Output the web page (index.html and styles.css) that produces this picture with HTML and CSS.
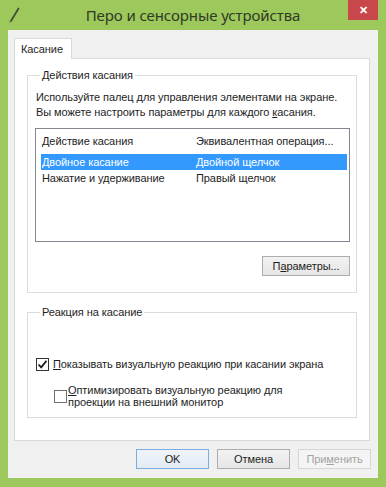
FILE: index.html
```html
<!DOCTYPE html>
<html lang="ru">
<head>
<meta charset="utf-8">
<title>Перо и сенсорные устройства</title>
<link rel="stylesheet" href="styles.css">
</head>
<body>
<div class="window">
  <div class="titlebar">
    <div class="tb-left">
      <svg class="app-icon" width="12" height="17" viewBox="0 0 12 17">
        <path d="M2 15 L9.5 2.5" stroke="#3f4d33" stroke-width="1.7" fill="none" stroke-linecap="round"/>
        <path d="M0.8 16.4 L1.8 14.4" stroke="#56653f" stroke-width="1" fill="none"/>
      </svg>
    </div>
    <div class="title">Перо и сенсорные устройства</div>
    <div class="tb-right"><div class="close">&#x2715;</div></div>
  </div>
  <div class="client">
    <div class="tabs"><div class="tab">Касание</div></div>
    <div class="panel">
      <fieldset class="group g1">
        <legend>Действия касания</legend>
        <p class="desc">Используйте палец для управления элементами на экране.<br>Вы можете настроить параметры для каждого <u>к</u>асания.</p>
        <div class="list">
          <div class="row head"><span class="c1">Действие касания</span><span class="c2">Эквивалентная операция...</span></div>
          <div class="row sel"><span class="c1">Двойное касание</span><span class="c2">Двойной щелчок</span></div>
          <div class="row"><span class="c1">Нажатие и удерживание</span><span class="c2">Правый щелчок</span></div>
        </div>
        <div class="btn-row"><button class="btn params">П<u>а</u>раметры...</button></div>
      </fieldset>
      <fieldset class="group g2">
        <legend>Реакция на касание</legend>
        <label class="check c-first">
          <span class="box checked"><svg width="11" height="11" viewBox="0 0 11 11"><path d="M1.5 5.5 L4.2 8.3 L9.5 1.8" stroke="#1a1a1a" stroke-width="1.8" fill="none"/></svg></span>
          <span class="ctext"><u>П</u>оказывать визуальную реакцию при касании экрана</span>
        </label>
        <label class="check c-second">
          <span class="box"></span>
          <span class="ctext"><u>О</u>птимизировать визуальную реакцию для<br>проекции на внешний монитор</span>
        </label>
      </fieldset>
    </div>
    <div class="dialog-buttons">
      <button class="btn default">OK</button>
      <button class="btn">Отмена</button>
      <button class="btn disabled">При<u>м</u>енить</button>
    </div>
  </div>
</div>
</body>
</html>
```

FILE: styles.css
```css
* { box-sizing: border-box; }
html, body { margin: 0; padding: 0; }
body {
  background: #9dc85b;
  font-family: "Liberation Sans", Arial, sans-serif;
  font-size: 11px;
  letter-spacing: -0.08px;
  color: #1e1e1e;
}
.window {
  width: 386px;
  height: 487px;
  background: #9dc85b;
  display: flex;
  flex-direction: column;
  white-space: nowrap;
}
.titlebar {
  height: 30px;
  display: grid;
  grid-template-columns: 1fr auto 1fr;
}
.tb-left { padding: 6px 0 0 9px; }
.title {
  font-family: "Noto Sans", "Open Sans", sans-serif;
  font-size: 15px;
  letter-spacing: -0.1px;
  color: #2e3a26;
  line-height: 30px;
}
.tb-right { display: flex; justify-content: flex-end; align-items: flex-start; }
.close {
  width: 30px;
  height: 20px;
  margin-right: 8px;
  background: #c7474a;
  color: #fff;
  font-size: 11px;
  font-weight: bold;
  text-align: center;
  line-height: 20px;
  letter-spacing: 0;
}
.client {
  margin: 0 8px;
  height: 448px;
  background: #f0f0f0;
  padding: 8px 8px 0 6px;
}
.tabs { display: flex; }
.tab {
  position: relative;
  z-index: 1;
  width: 58px;
  height: 21px;
  margin-bottom: -1px;
  background: #fff;
  border: 1px solid #d9d9d9;
  border-bottom: none;
  padding: 2px 0 0 6px;
  line-height: 16px;
}
.panel {
  background: #fff;
  border: 1px solid #d9d9d9;
  height: 383px;
  padding: 8px 12px 0 12px;
}
.group {
  margin: 0;
  border: 1px solid #dcdcdc;
  padding: 0 6px 0 7px;
  min-width: 0;
}
.group legend {
  padding: 0 2px;
  margin-left: 5px;
  line-height: 16px;
}
.g1 { height: 226px; }
.g2 { margin-top: 11px; height: 114px; padding-left: 7px; }
.desc {
  margin: 7px 0 0 1px;
  line-height: 15px;
}
.list {
  margin-top: 8px;
  height: 114px;
  border: 1px solid #828790;
  padding: 0 2px 0 5px;
}
.row {
  display: flex;
  height: 16px;
  line-height: 16px;
}
.row.head {
  height: 25px;
  line-height: 24px;
}
.c1 { width: 155px; padding-left: 1px; }
.c2 { flex: 1; }
.row.sel { background: #3399ff; color: #fff; }
.btn-row { display: flex; justify-content: flex-end; margin-top: 14px; }
.btn {
  font-family: inherit;
  font-size: 11px;
  letter-spacing: -0.08px;
  color: #1e1e1e;
  height: 20px;
  border: 1px solid #adadad;
  background: linear-gradient(#f2f2f2, #e6e6e6);
  padding: 0;
  line-height: 17px;
  margin: 0;
}
.params { width: 88px; }
.check { display: flex; align-items: flex-start; }
.box {
  width: 13px;
  height: 13px;
  border: 1px solid #707070;
  background: #fff;
  flex: none;
  display: flex;
  align-items: center;
  justify-content: center;
}
.box.checked { border-color: #333; }
.ctext { line-height: 13px; padding-left: 4px; }
.c-first { margin-top: 38px; margin-left: 1px; }
.c-second { margin-top: 13px; margin-left: 19px; }
.c-second .box { margin-top: 6px; }
.c-second .ctext { padding-left: 1px; line-height: 12px; }
.dialog-buttons {
  display: flex;
  justify-content: flex-end;
  gap: 8px;
  margin-top: 8px;
  margin-right: -1px;
}
.dialog-buttons .btn { width: 73px; }
.btn.default { border-color: #7aaee0; background: linear-gradient(#eef4fa, #e4ebf2); }
.btn.disabled { color: #a3a3a3; border-color: #d6d6d6; background: #f4f4f4; }
```
